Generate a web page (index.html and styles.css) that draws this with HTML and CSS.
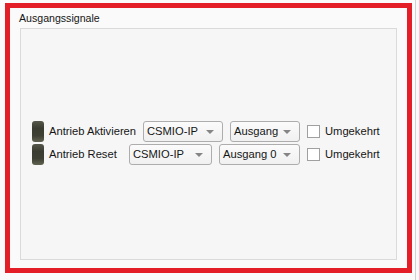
FILE: index.html
```html
<!DOCTYPE html>
<html lang="de">
<head>
<meta charset="utf-8">
<title>Ausgangssignale</title>
<link rel="stylesheet" href="styles.css">
</head>
<body>
<div class="screen">
  <div class="frame">
    <div class="title">Ausgangssignale</div>
    <div class="group">
      <div class="row">
        <span class="led"></span>
        <span class="label label-long">Antrieb Aktivieren</span>
        <span class="combo combo-a">CSMIO-IP<i class="arrow"></i></span>
        <span class="combo combo-b">Ausgang<i class="arrow"></i></span>
        <span class="check"></span>
        <span class="check-label">Umgekehrt</span>
      </div>
      <div class="row">
        <span class="led"></span>
        <span class="label label-short">Antrieb Reset</span>
        <span class="combo combo-c">CSMIO-IP<i class="arrow"></i></span>
        <span class="combo combo-d">Ausgang 0<i class="arrow"></i></span>
        <span class="check"></span>
        <span class="check-label">Umgekehrt</span>
      </div>
    </div>
  </div>
</div>
</body>
</html>
```
FILE: styles.css
```css
html, body {
  margin: 0;
  padding: 0;
  background: #fafafa;
}
body {
  font-family: "Liberation Sans", Arial, sans-serif;
  font-size: 11.2px;
  color: #151515;
}
.screen {
  width: 416px;
  height: 280px;
  border-right: 1px solid #d2d2d2;
  padding-top: 3px;
  box-sizing: border-box;
}
.frame {
  margin-left: 5px;
  width: 407px;
  height: 270px;
  box-sizing: border-box;
  border: 5px solid #e31e26;
  padding: 2px 10px 8px 10px;
  display: flex;
  flex-direction: column;
  background: #fafafa;
}
.title {
  line-height: 16px;
  height: 16px;
  margin-left: -1px;
  font-size: 10.6px;
  margin-bottom: 2px;
}
.group {
  flex: 1;
  border: 1px solid #dadada;
  background: #f6f6f6;
  display: flex;
  flex-direction: column;
  justify-content: center;
  gap: 2px;
  padding: 0 0 3px 11px;
}
.row {
  display: flex;
  align-items: center;
  height: 21px;
}
.led {
  width: 12px;
  height: 21px;
  border-radius: 3px;
  background: linear-gradient(to bottom, #55574a 0%, #3b3c31 35%, #3f4034 70%, #616350 100%);
  margin-right: 5px;
  flex: none;
}
.label { flex: none; }
.label-long { width: 94px; }
.label-short { width: 80px; }
.combo {
  position: relative;
  flex: none;
  height: 21px;
  box-sizing: border-box;
  border: 1px solid #adadad;
  border-radius: 3px;
  background: linear-gradient(to bottom, #fbfbfb, #f0f0f0);
  padding-left: 3px;
  line-height: 19px;
  margin-right: 7px;
}
.combo-a { width: 80px; }
.combo-b { width: 70px; }
.combo-c { width: 83px; }
.combo-d { width: 81px; }
.arrow {
  position: absolute;
  right: 8px;
  top: 8px;
  width: 0;
  height: 0;
  border-left: 4px solid transparent;
  border-right: 4px solid transparent;
  border-top: 4px solid #858585;
}
.check {
  flex: none;
  width: 13px;
  height: 13px;
  box-sizing: border-box;
  border: 1px solid #a0a0a0;
  background: #ffffff;
  margin-right: 5px;
}
.check-label { flex: none; }
```
